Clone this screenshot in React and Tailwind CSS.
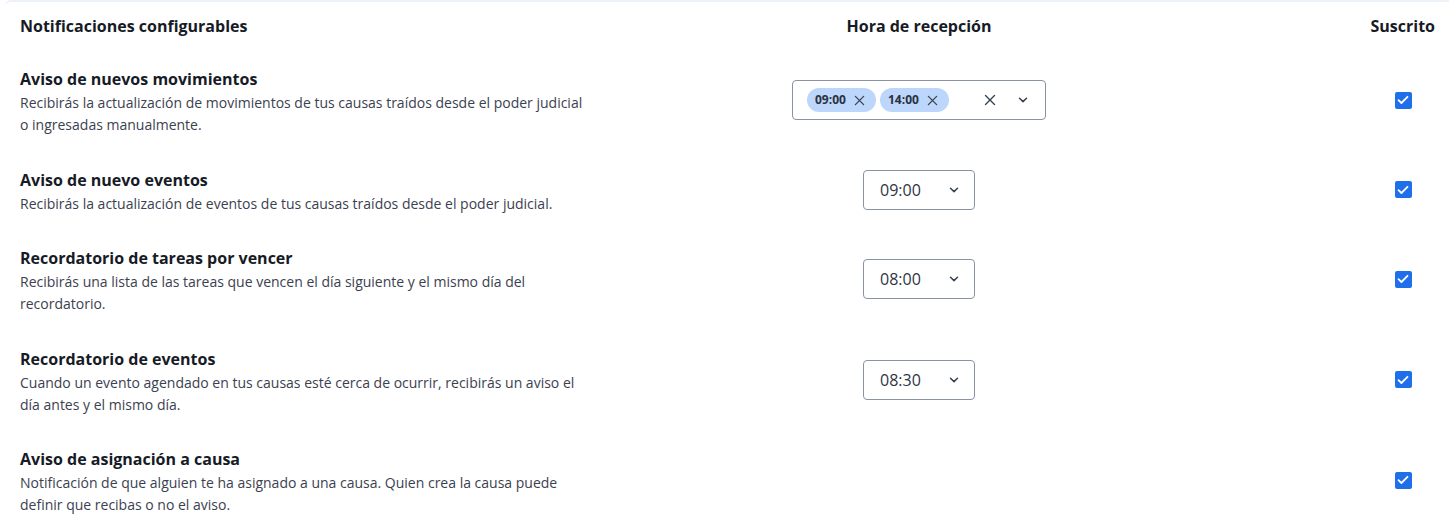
import { useState } from 'react';

const rows = [
  {
    title: 'Aviso de nuevos movimientos',
    desc: 'Recibirás la actualización de movimientos de tus causas traídos desde el poder judicial o ingresadas manualmente.',
    multi: ['09:00', '14:00'],
  },
  {
    title: 'Aviso de nuevo eventos',
    desc: 'Recibirás la actualización de eventos de tus causas traídos desde el poder judicial.',
    time: '09:00',
  },
  {
    title: 'Recordatorio de tareas por vencer',
    desc: 'Recibirás una lista de las tareas que vencen el día siguiente y el mismo día del recordatorio.',
    time: '08:00',
  },
  {
    title: 'Recordatorio de eventos',
    desc: 'Cuando un evento agendado en tus causas esté cerca de ocurrir, recibirás un aviso el día antes y el mismo día.',
    time: '08:30',
  },
  {
    title: 'Aviso de asignación a causa',
    desc: 'Notificación de que alguien te ha asignado a una causa. Quien crea la causa puede definir que recibas o no el aviso.',
  },
];

function Chevron() {
  return (
    <svg width="10" height="6" viewBox="0 0 10 6" fill="none" stroke="#374151" strokeWidth="1.5" strokeLinecap="round" strokeLinejoin="round">
      <path d="M1.5 1.2 5 4.6l3.5-3.4" />
    </svg>
  );
}

function Cross({ size = 12, color = '#374151' }) {
  return (
    <svg width={size} height={size} viewBox="0 0 12 12" fill="none" stroke={color} strokeWidth="1.4" strokeLinecap="round">
      <path d="M1.5 1.5l9 9M10.5 1.5l-9 9" />
    </svg>
  );
}

function Checkbox({ checked, onChange }) {
  return (
    <button type="button" onClick={onChange}
      className={`w-[17px] h-[17px] rounded-[2px] flex items-center justify-center ${checked ? 'bg-[#1f6feb]' : 'border border-gray-400 bg-white'}`}>
      {checked && (
        <svg width="12" height="10" viewBox="0 0 12 10" fill="none" stroke="white" strokeWidth="1.8" strokeLinecap="round" strokeLinejoin="round">
          <path d="M1.5 5.2 4.4 8 10.5 1.8" />
        </svg>
      )}
    </button>
  );
}

export default function App() {
  const [subs, setSubs] = useState(rows.map(() => true));
  const toggle = (i) => () => setSubs(subs.map((v, j) => (j === i ? !v : v)));

  return (
    <div className="min-h-screen bg-white font-['Open_Sans','Noto_Sans',sans-serif] text-[#161b26]">
      <div className="ml-[5px] border-t-2 border-[#edf2fa] rounded-tl-md">
        <div className="grid grid-cols-[680px_438px_1fr] pl-[15px] pr-[14px]">
          <div className="h-[48px] flex items-center text-base font-bold">Notificaciones configurables</div>
          <div className="h-[48px] flex items-center justify-center text-base font-bold">Hora de recepción</div>
          <div className="h-[48px] flex items-center justify-end text-base font-bold">Suscrito</div>

          {rows.map((r, i) => (
            <div key={r.title} className="contents">
              <div className="pt-[17px] pb-[14.5px]">
                <div className="text-base font-bold leading-6">{r.title}</div>
                <p className="mt-px max-w-[572px] text-sm leading-[22px] text-[#3b4150]">{r.desc}</p>
              </div>
              <div className="flex items-center justify-center">
                {r.multi && (
                  <div className="w-[254px] h-10 border border-[#8a93a5] rounded flex items-center pl-[14px] pr-[17px]">
                    <div className="flex gap-1 flex-1">
                      {r.multi.map((t) => (
                        <span key={t} className="h-6 w-[69px] rounded-full bg-[#bdd6fb] flex items-center justify-between pl-2 pr-[11px] text-xs font-bold text-[#2a3140]">
                          {t}
                          <Cross size={11} />
                        </span>
                      ))}
                    </div>
                    <span className="mr-[22px]"><Cross size={12} /></span>
                    <Chevron />
                  </div>
                )}
                {r.time && (
                  <div className="w-[112px] h-10 border border-[#8a93a5] rounded flex items-center justify-between pl-4 pr-[15px] text-base text-[#2f3544]">
                    {r.time}
                    <Chevron />
                  </div>
                )}
              </div>
              <div className="flex items-center justify-end">
                <div className="w-16 flex justify-center">
                  <Checkbox checked={subs[i]} onChange={toggle(i)} />
                </div>
              </div>
            </div>
          ))}
        </div>
      </div>
    </div>
  );
}
